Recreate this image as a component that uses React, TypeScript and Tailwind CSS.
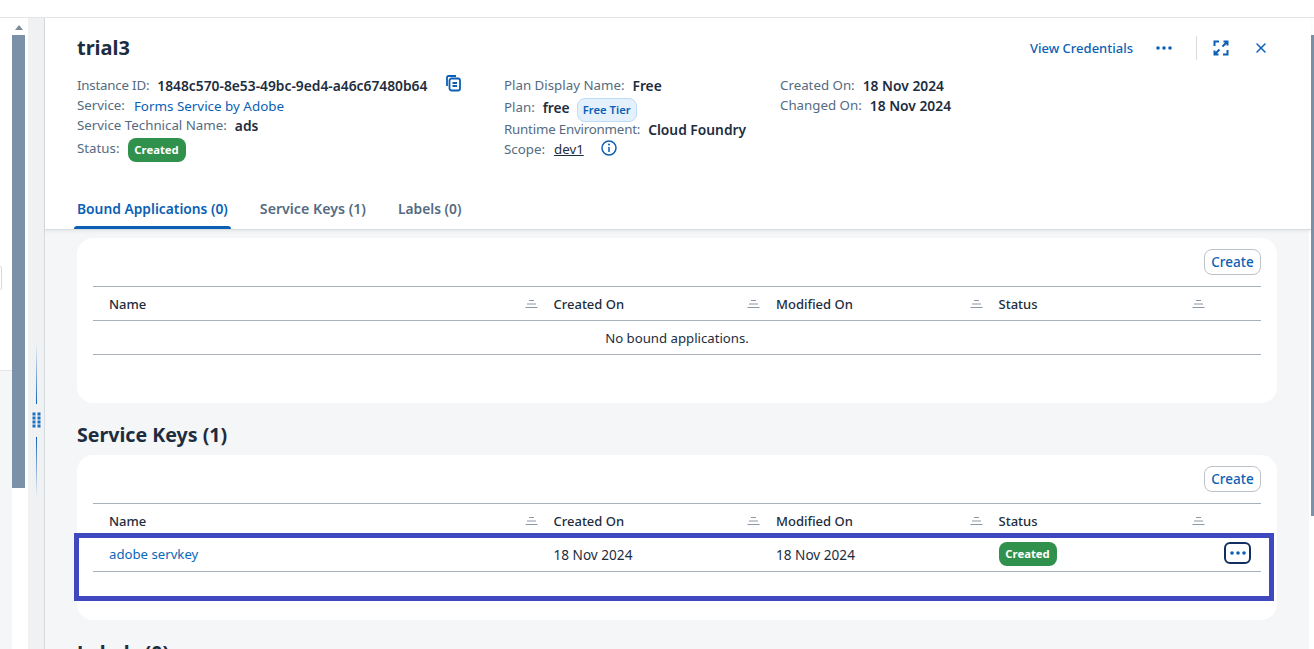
import React from "react";
import { X } from "lucide-react";

const FONT = "font-['Noto_Sans','Open_Sans',sans-serif]";
const COLS = "grid-cols-[444.5px_222.5px_222.5px_222.5px_1fr]";

function SortIcon() {
  return (
    <svg width="13" height="10" viewBox="0 0 13 10" className="shrink-0">
      <path d="M4 1.500h5M2 5h9M0.500 8.500h12" stroke="#8b97a5" strokeWidth="1" fill="none" />
    </svg>
  );
}

function Dots({ color = "#0b5fb5" }: { color?: string }) {
  return (
    <svg width="16" height="4" viewBox="0 0 16 4">
      <circle cx="2" cy="2" r="1.800" fill={color} />
      <circle cx="8" cy="2" r="1.800" fill={color} />
      <circle cx="14" cy="2" r="1.800" fill={color} />
    </svg>
  );
}

function CreatedBadge() {
  return (
    <span className="inline-flex h-6 w-[58px] items-center justify-center rounded-lg bg-[#30914c] text-[11.300px] font-bold text-white">
      Created
    </span>
  );
}

function HeadCell({ label }: { label: string }) {
  return (
    <div className="flex items-center justify-between pl-4 text-[13px] font-medium text-[#1d2d3e]">
      <span className="translate-y-[1px]">{label}</span>
      <SortIcon />
    </div>
  );
}

function TableHeader() {
  return (
    <div className={`grid h-[34px] ${COLS} border-t border-[#a9b1ba]`}>
      <HeadCell label="Name" />
      <HeadCell label="Created On" />
      <HeadCell label="Modified On" />
      <HeadCell label="Status" />
    </div>
  );
}

function CreateRow() {
  return (
    <div className="flex h-[48px] items-start justify-end pt-[11px]">
      <button className="h-[26px] w-[57px] rounded-lg border border-[#bcc3ca] bg-white text-[13.500px] font-medium text-[#0b5fb5]">
        Create
      </button>
    </div>
  );
}

function Label({ children, className = "" }: { children: React.ReactNode; className?: string }) {
  return <span className={`mr-2 text-[13.300px] text-[#556b82] ${className}`}>{children}</span>;
}

function Value({ children }: { children: React.ReactNode }) {
  return <span className="text-[13.800px] font-semibold text-[#1d2d3e]">{children}</span>;
}

export default function App() {
  return (
    <div className={`relative flex h-[649px] w-[1314px] flex-col overflow-hidden bg-white text-[14px] ${FONT}`}>
      <div className="h-[18px] shrink-0 border-b border-[#e3e5e7] bg-white" />
      <div className="flex min-h-0 flex-1">
        {/* far-left pane */}
        <div className="flex w-[12px] shrink-0 flex-col">
          <div className="flex h-[353px] items-start border-b border-[#e3e5e7] bg-white pt-[248px]">
            <div className="h-[24px] w-[2px] rounded-r border-y border-r border-[#d5d9dd]" />
          </div>
          <div className="flex-1 bg-[#f5f6f7]" />
        </div>
        {/* left scrollbar */}
        <div className="flex w-[13px] shrink-0 flex-col items-center bg-white">
          <svg width="8" height="5" viewBox="0 0 8 5" className="mt-[7px] mb-[5px] shrink-0">
            <path d="M0 5L4 0l4 5z" fill="#7d8b99" />
          </svg>
          <div className="h-[453px] w-full bg-[#7b91a8]" />
        </div>
        <div className="w-[3px] shrink-0 bg-white" />
        {/* splitter */}
        <div className="flex w-[17px] shrink-0 flex-col items-center border-r border-[#d5dadd] bg-[#eff1f3] pt-[326px]">
          <div className="h-[60px] w-px bg-gradient-to-b from-[#eff1f3] to-[#0b5fb5]" />
          <svg width="9" height="17" viewBox="0 0 9 17" className="my-[8px] shrink-0">
            {[1.5, 5.5, 9.5, 13.5].map((y) => (
              <g key={y} fill="#1b6fc0">
                <rect x="0.5" y={y - 1} width="3" height="3" />
                <rect x="5.5" y={y - 1} width="3" height="3" />
              </g>
            ))}
          </svg>
          <div className="h-[60px] w-px bg-gradient-to-b from-[#0b5fb5] to-[#eff1f3]" />
        </div>
        {/* main panel */}
        <div className="flex min-w-0 flex-1 flex-col">
          <header className="z-10 h-[212px] shrink-0 border-b border-[#d9dcdf] bg-white pr-[42px] pl-8 shadow-[0_2px_3px_rgba(0,0,0,0.05)]">
            <div className="flex h-[58px] items-start justify-between pt-[16px]">
              <h1 className="text-[20px] leading-[27px] font-bold text-[#1d2d3e]">trial3</h1>
              <div className="flex h-[27px] items-center">
                <span className="translate-y-[1px] pr-[1px] text-[13px] font-medium text-[#0b5fb5]">View Credentials</span>
                <span className="mr-[24px] ml-[22px] flex"><Dots /></span>
                <div className="h-[24px] w-px bg-[#d9dcdf]" />
                <svg width="16" height="16" viewBox="0 0 16 16" className="ml-4" fill="none" stroke="#0b5fb5" strokeWidth="2">
                  <path d="M6 1.500H1.500V6M10 14.500h4.500V10M9.500 6.500L14.500 1.500M10.500 1.500h4V5.500M6.500 9.500L1.500 14.500M1.500 10.500v4h4" />
                </svg>
                <X size={16} strokeWidth={2.2} color="#0b5fb5" className="ml-[24px]" />
              </div>
            </div>
            <div className="flex h-[113px] items-start">
              <div className="w-[427px] shrink-0">
                <div className="relative flex h-5 items-center">
                  <Label className="tracking-[-0.2px]">Instance ID:</Label>
                  <Value>1848c570-8e53-49bc-9ed4-a46c67480b64</Value>
                  <svg width="15" height="17" viewBox="0 0 15 17" fill="none" stroke="#0b5fb5" strokeWidth="1.800" className="absolute top-[-1px] left-[369px]">
                    <path d="M1 11V2.500A1.500 1.500 0 0 1 2.500 1H10" />
                    <rect x="3.500" y="3.500" width="10.500" height="12" rx="2" />
                    <path d="M6.500 8h4.500M6.500 11h4.500" />
                  </svg>
                </div>
                <div className="flex h-5 items-center">
                  <Label className="mr-[9px]">Service:</Label>
                  <span className="text-[13.400px] text-[#0b5fb5]">Forms Service by Adobe</span>
                </div>
                <div className="flex h-5 items-center">
                  <Label>Service Technical Name:</Label>
                  <Value>ads</Value>
                </div>
                <div className="mt-[2px] flex h-6 items-center">
                  <span className="mr-2 -translate-y-[1px] text-[13.300px] text-[#556b82]">Status:</span>
                  <CreatedBadge />
                </div>
              </div>
              <div className="w-[276px] shrink-0">
                <div className="flex h-5 items-center">
                  <Label>Plan Display Name:</Label>
                  <Value>Free</Value>
                </div>
                <div className="flex h-6 items-center">
                  <Label>Plan:</Label>
                  <Value>free</Value>
                  <span className="ml-[7px] inline-flex h-6 w-[60px] translate-y-[2px] items-center justify-center rounded-lg border border-[#bcdcf8] bg-[#e4f1fd] text-[11.300px] font-semibold text-[#0b5fb5]">
                    Free Tier
                  </span>
                </div>
                <div className="flex h-5 items-center">
                  <Label className="tracking-[-0.2px]">Runtime Environment:</Label>
                  <Value>Cloud Foundry</Value>
                </div>
                <div className="flex h-5 items-center">
                  <Label className="mr-[9px]">Scope:</Label>
                  <span className="text-[13.300px] text-[#1d2d3e] underline">dev1</span>
                  <svg width="16" height="16" viewBox="0 0 16 16" fill="none" className="ml-[17px] -translate-y-[2px]">
                    <circle cx="8" cy="8" r="7" stroke="#0b5fb5" strokeWidth="1.500" />
                    <path d="M8 7v5" stroke="#0b5fb5" strokeWidth="1.500" />
                    <circle cx="8" cy="4.500" r="1" fill="#0b5fb5" />
                  </svg>
                </div>
              </div>
              <div>
                <div className="flex h-5 items-center">
                  <Label>Created On:</Label>
                  <Value>18 Nov 2024</Value>
                </div>
                <div className="flex h-5 items-center">
                  <Label>Changed On:</Label>
                  <Value>18 Nov 2024</Value>
                </div>
              </div>
            </div>
            <nav className="flex h-[40px] gap-8 text-[13.800px] font-semibold text-[#556b82]">
              <div className="relative flex h-full items-center pt-[1px] text-[#0b5fb5]">
                Bound Applications (0)
                <div className="absolute right-[-3px] bottom-0 left-[-3px] h-[3px] rounded-t bg-[#0b5fb5]" />
              </div>
              <div className="flex h-full items-center text-[14.200px]">Service Keys (1)</div>
              <div className="flex h-full items-center pt-[1px]">Labels (0)</div>
            </nav>
          </header>
          <main className="min-h-0 flex-1 overflow-hidden border-r-[2px] border-white bg-[#f5f6f7] pt-2 pr-[32px] pl-8">
            <section className="h-[165px] rounded-2xl bg-white px-4">
              <CreateRow />
              <TableHeader />
              <div className="flex h-[35px] items-center justify-center border-y border-[#a9b1ba] pt-[2px] text-[13.200px] text-[#1d2d3e]">
                No bound applications.
              </div>
            </section>
            <h2 className="mt-[19px] mb-[7px] h-[26px] text-[19.600px] leading-[26px] font-bold text-[#1d2d3e]">Service Keys (1)</h2>
            <section className="h-[165px] rounded-2xl bg-white px-4">
              <CreateRow />
              <TableHeader />
              <div className={`grid h-[35px] ${COLS} items-center border-b border-[#a9b1ba] text-[#1d2d3e]`}>
                <span className="translate-y-[1px] pl-4 text-[13.200px] text-[#0b67b8]">adobe servkey</span>
                <span className="translate-y-[1px] pl-4 text-[13.600px]">18 Nov 2024</span>
                <span className="translate-y-[1px] pl-4 text-[13.600px]">18 Nov 2024</span>
                <span className="flex pl-4"><CreatedBadge /></span>
                <span className="flex justify-end pr-[10px]">
                  <span className="flex h-[22px] w-[27px] -translate-y-[1px] items-center justify-center rounded-md border-2 border-[#12305f]">
                    <Dots />
                  </span>
                </span>
              </div>
            </section>
            <h2 className="mt-[20px] text-[19.600px] leading-[26px] font-bold text-[#1d2d3e]">Labels (0)</h2>
          </main>
        </div>
        {/* right scrollbar */}
        <div className="w-[3px] shrink-0 bg-white pt-[17px]">
          <div className="h-[481px] bg-[#7b91a8]" />
        </div>
      </div>
      {/* annotation rectangle drawn over the screenshot */}
      <div className="absolute top-[533px] left-[74px] h-[68px] w-[1200px] border-[5px] border-[#3f48bf]" />
    </div>
  );
}
